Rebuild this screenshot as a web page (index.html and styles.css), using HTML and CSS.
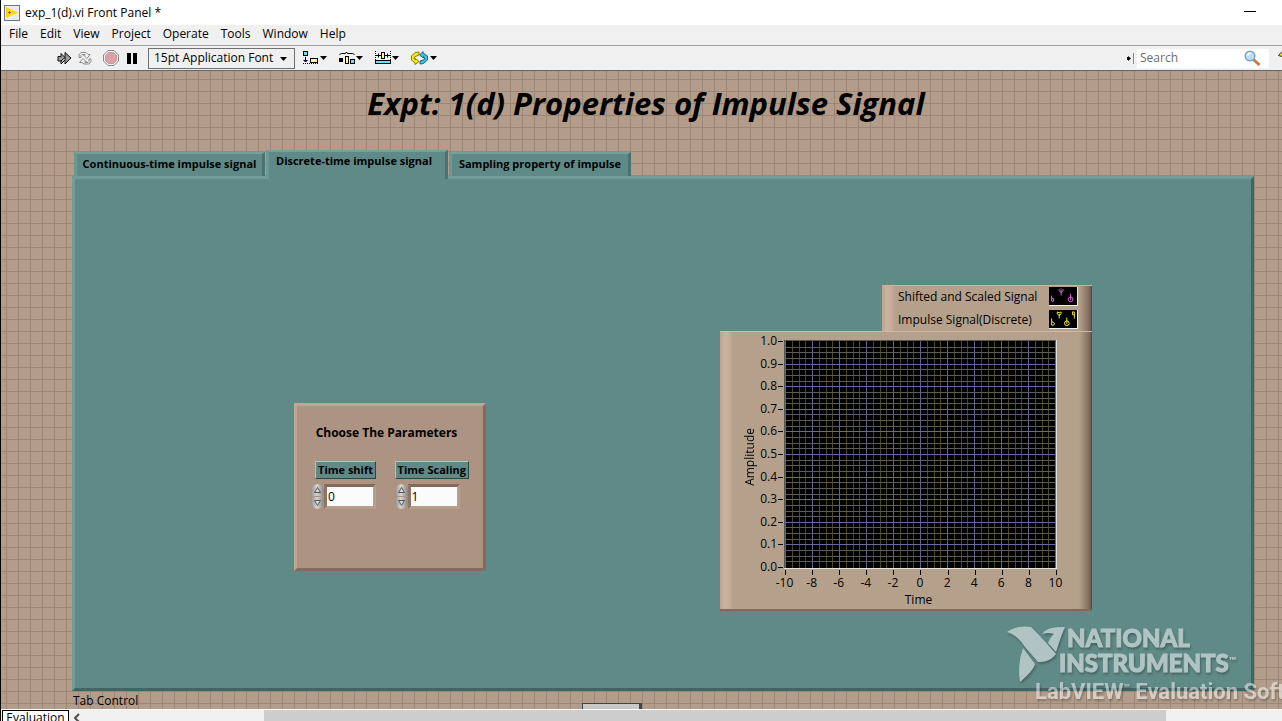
FILE: index.html
```
<!DOCTYPE html>
<html lang="en">
<head>
<meta charset="utf-8">
<title>exp_1(d).vi Front Panel *</title>
<link rel="stylesheet" href="styles.css">
</head>
<body>
<div class="window">
  <header class="titlebar">
    <svg class="app-icon" width="16" height="16" viewBox="0 0 16 16" aria-hidden="true">
      <rect x=".5" y=".5" width="15" height="15" fill="#e9ecef" stroke="#6f7780"/>
      <path d="M2 2l12 5.500L2 13z" fill="#ffd800"/><path d="M4 7.500h3M5.500 6v3" stroke="#8a6d2a"/>
    </svg>
    <span class="title-text">exp_1(d).vi Front Panel *</span>
    <button class="minimize" aria-label="Minimize"></button>
  </header>
  <nav class="menubar">
    <button>File</button><button>Edit</button><button>View</button><button>Project</button><button>Operate</button><button>Tools</button><button>Window</button><button>Help</button>
  </nav>
  <div class="toolbar">
    <button class="tool" aria-label="Run">
      <svg width="15" height="15" viewBox="0 0 15 15"><path d="M1 5.500h3V2.500l4 4V1.500l6 5.500-6 6V9l-4 4V10H1z" fill="#9a9a9a" stroke="#111"/><path d="M4 10l4-3.500L8 9" stroke="#111" fill="#fff"/></svg>
    </button>
    <button class="tool loop" aria-label="Run continuously">
      <svg width="16" height="15" viewBox="0 0 16 15" fill="#f4f4f4" stroke="#8a8a8a"><path d="M2 6.500V4l2-2.500h5L11 3.500h2L10 7.500 6.500 4H8.500L8 3.500H5L4 4.500v2z"/><path d="M14 8v2.500l-2 2.500H7L5 11.500H2.500L6 7.500 9.500 11H7.500l.5.500h3l1-1V8z"/></svg>
    </button>
    <button class="tool stop" aria-label="Abort">
      <svg width="16" height="16" viewBox="0 0 16 16"><path d="M5 .5h6L15.500 5v6L11 15.500H5L.5 11V5z" fill="#f5f0f0" stroke="#888"/><path d="M5.500 2.500h5l3 3v5l-3 3h-5l-3-3v-5z" fill="#d9a3a5" stroke="#c99"/></svg>
    </button>
    <button class="tool pause" aria-label="Pause">
      <svg width="10" height="11" viewBox="0 0 10 11"><path d="M0 0h4v11H0zM6 0h4v11H6z"/></svg>
    </button>
    <div class="font-box">
      <select class="font-select" aria-label="Text settings"><option>15pt Application Font</option></select>
      <svg class="font-arrow" width="7" height="4" viewBox="0 0 7 4"><path d="M0 0h7L3.500 4z"/></svg>
    </div>
    <button class="tool drop" aria-label="Align objects">
      <svg width="24" height="14" viewBox="0 0 24 14"><rect x=".5" y=".5" width="4" height="4" fill="#6fe0f8" stroke="#000"/><path d="M2.500 6v5M.5 9.500h4M1.500 10.500h2" stroke="#000"/><path d="M0 12.500h15" stroke="#000" stroke-dasharray="1 1"/><rect x="7.500" y="7.500" width="7" height="4" fill="#fff58a" stroke="#000"/><path d="M17 5h7l-3.500 4z"/></svg>
    </button>
    <button class="tool drop" aria-label="Distribute objects">
      <svg width="24" height="14" viewBox="0 0 24 14"><path d="M.5 3.500l2-1h4l1-1.500 1 1.500h5l2 1" fill="none" stroke="#000"/><path d="M0 7h4v4H0z"/><rect x="6.500" y="5.500" width="3" height="7" fill="#fff58a" stroke="#000"/><rect x="11.500" y="8.500" width="4" height="4" fill="#6fe0f8" stroke="#000"/><path d="M17 5h7l-3.500 4z"/></svg>
    </button>
    <button class="tool drop" aria-label="Resize objects">
      <svg width="24" height="14" viewBox="0 0 24 14"><path d="M.5 0v9M15.500 0v9" stroke="#000" stroke-dasharray="1 1"/><path d="M1 4.500h5M10 4.500h5M3.500 2.500v4M12.500 2.500v4" stroke="#000"/><rect x="6.500" y="1.500" width="3" height="6" fill="#fff58a" stroke="#000"/><rect x=".5" y="9.500" width="15" height="3" fill="#6fe0f8" stroke="#000"/><path d="M17 5h7l-3.500 4z"/></svg>
    </button>
    <button class="tool drop" aria-label="Reorder">
      <svg width="26" height="14" viewBox="0 0 26 14"><path d="M8 1L4 1.500.5 5v4L4 12v1.500L8 10.500 4.500 7.500V9L3.500 8V6L8 4z" fill="#f3e51c" stroke="#8a8200"/><path d="M9 13l3.500-.5 4-3.500V5L12 2V.5L8.500 4l4 3V5.500l1 1v2L9 10z" fill="#4ab8dc" stroke="#176d8c"/><path d="M19 5h7l-3.500 4z"/></svg>
    </button>
    <div class="search-area">
      <svg width="7" height="11" viewBox="0 0 7 11" aria-hidden="true"><path d="M0 4h1v3H0zM1 3l3 2.500L1 8z"/><path d="M6.500 0v11" stroke="#888"/></svg>
      <div class="search-box">
        <input class="search" type="text" placeholder="Search" aria-label="Search">
        <svg width="17" height="17" viewBox="0 0 17 17" aria-hidden="true"><path d="M9.500 9.500l6 5.500" stroke="#c47a45" stroke-width="3"/><circle cx="6" cy="6" r="4.800" fill="#b9e2f7" stroke="#7fa3bd" stroke-width="1.500"/><path d="M3.500 5.500q1-2.500 3-2.500" stroke="#fff" stroke-width="1.500" fill="none"/></svg>
      </div>
      <button class="tool help" aria-label="Context help"><svg width="12" height="16" viewBox="0 0 12 16"><path d="M.5 5.500L4 1.500h5l2.500 3v3L8 10.500v1H4.500V8L8 6 7 4.500H5.500L4 6.500z" fill="#f3e51c" stroke="#333"/></svg></button>
    </div>
  </div>

  <main class="panel">
    <h1 class="heading">Expt: 1(d) Properties of Impulse Signal</h1>
    <div class="tabs" role="tablist">
      <button class="tab" role="tab" aria-selected="false">Continuous-time impulse signal</button>
      <button class="tab selected" role="tab" aria-selected="true">Discrete-time impulse signal</button>
      <button class="tab" role="tab" aria-selected="false">Sampling property of impulse</button>
    </div>
    <section class="page" role="tabpanel">
      <div class="card">
        <h2 class="card-title">Choose The Parameters</h2>
        <div class="fields">
          <div class="field">
            <label class="field-label" for="shift">Time shift</label>
            <div class="numeric">
              <div class="stepper">
                <button class="step up" aria-label="Increase time shift"><svg width="7" height="6" viewBox="0 0 7 6"><path d="M.5 5.500l3-5 3 5z"/></svg></button>
                <button class="step down" aria-label="Decrease time shift"><svg width="7" height="6" viewBox="0 0 7 6"><path d="M.5.500l3 5 3-5z"/></svg></button>
              </div>
              <input class="value" id="shift" type="text" value="0">
            </div>
          </div>
          <div class="field">
            <label class="field-label" for="scaling">Time Scaling</label>
            <div class="numeric">
              <div class="stepper">
                <button class="step up" aria-label="Increase time scaling"><svg width="7" height="6" viewBox="0 0 7 6"><path d="M.5 5.500l3-5 3 5z"/></svg></button>
                <button class="step down" aria-label="Decrease time scaling"><svg width="7" height="6" viewBox="0 0 7 6"><path d="M.5.500l3 5 3-5z"/></svg></button>
              </div>
              <input class="value" id="scaling" type="text" value="1">
            </div>
          </div>
        </div>
      </div>

      <div class="graph">
        <div class="legend">
          <div class="legend-row"><span>Shifted and Scaled Signal</span>
            <svg class="swatch" width="29" height="19" viewBox="0 0 29 19" fill="none" stroke="#e56be5"><path d="M2.500 9v6h2v-3h-2M12.500 2.500v-1M10.500 2v2l2 2 2-2V2M12.500 3v6M22.500 7v7"/><circle cx="22.500" cy="13" r="2.500"/></svg>
          </div>
          <div class="legend-row"><span>Impulse Signal(Discrete)</span>
            <svg class="swatch" width="29" height="19" viewBox="0 0 29 19" fill="none" stroke="#f5ee2e"><path d="M2.500 9v7h2l1-2-3-2M8.500 2v2l2 2 2-2V2l-2 1zM10.500 4v5M18.500 8v7M26.500 2h-2v3h2M26.500 2v7"/><circle cx="18.500" cy="14" r="2.500"/></svg>
          </div>
        </div>
        <div class="chart">
          <span class="axis-name vertical">Amplitude</span>
          <ol class="y-scale"><li>1.0</li><li>0.9</li><li>0.8</li><li>0.7</li><li>0.6</li><li>0.5</li><li>0.4</li><li>0.3</li><li>0.2</li><li>0.1</li><li>0.0</li></ol>
          <svg class="plot" width="273" height="229" viewBox="0 0 273 229" shape-rendering="crispEdges" role="img" aria-label="Empty plot">
            <defs>
              <pattern id="cols" x="1" width="27" height="229" patternUnits="userSpaceOnUse"><path d="M7 0h1v229H7zM14 0h1v229h-1zM20 0h1v229h-1z" fill="#4b4a0a"/></pattern>
              <pattern id="major" x="1" width="27" height="229" patternUnits="userSpaceOnUse"><path d="M0 0h1v229H0z" fill="#62628c"/></pattern>
            </defs>
            <rect width="273" height="229" fill="#e6e0da"/>
            <rect width="272" height="228" fill="#000"/>
            <rect width="272" height="228" fill="url(#cols)"/>
            <path transform="translate(0 1)" stroke="#5c5c5c" d="M0 6.500h272M0 11.500h272M0 17.500h272M0 28.500h272M0 34.500h272M0 40.500h272M0 51.500h272M0 57.500h272M0 62.500h272M0 73.500h272M0 79.500h272M0 85.500h272M0 96.500h272M0 102.500h272M0 107.500h272M0 119.500h272M0 124.500h272M0 130.500h272M0 141.500h272M0 147.500h272M0 153.500h272M0 164.500h272M0 170.500h272M0 175.500h272M0 186.500h272M0 192.500h272M0 198.500h272M0 209.500h272M0 215.500h272M0 220.500h272"/>
            <rect width="272" height="228" fill="url(#major)"/>
            <path transform="translate(0 1)" stroke="#6a6a98" d="M0 23.500h272M0 45.500h272M0 68.500h272M0 90.500h272M0 113.500h272M0 136.500h272M0 158.500h272M0 181.500h272M0 203.500h272"/>
            <path d="M0 .5h272M.5 0v228" stroke="#555"/>
          </svg>
          <ol class="x-scale"><li>-10</li><li>-8</li><li>-6</li><li>-4</li><li>-2</li><li>0</li><li>2</li><li>4</li><li>6</li><li>8</li><li>10</li></ol>
          <span class="axis-name horizontal">Time</span>
        </div>
      </div>
    </section>
    <p class="caption">Tab Control</p>
    <div class="peek"></div>
    <div class="watermark">
      <div class="brand">
        <svg width="60" height="56" viewBox="0 0 60 56" aria-hidden="true"><path d="M0 6Q10-1 24 1L33 10 49 28Q42 37 31 36L18 21Q10 9 0 6z"/><path d="M16 22L28 38Q27 44 13 56 10 40 16 22z"/><path d="M35 8Q40 0 58 1 54 10 49 26L41 17Q44 10 47 8 41 6 35 8z"/></svg>
        <div class="brand-name"><span>NATIONAL</span><span class="second">INSTRUMENTS<sup>™</sup></span></div>
      </div>
      <div class="edition">LabVIEW<sup>™</sup> Evaluation Software</div>
    </div>
  </main>

  <footer class="statusbar">
    <span class="status">Evaluation</span>
    <div class="scrollbar">
      <svg width="6" height="10" viewBox="0 0 6 10"><path d="M5 1L1 5l4 4" fill="none" stroke="#505050" stroke-width="2"/></svg>
      <div class="thumb"></div>
    </div>
  </footer>
</div>
</body>
</html>
```
FILE: styles.css
```
* { box-sizing: border-box; }
body { margin: 0; font: 12px/16px "Open Sans", "Noto Sans", sans-serif; color: #000; }
button, input, select { font: inherit; color: inherit; border: 0; padding: 0; margin: 0; background: none; }
svg { display: block; flex: none; }
h1, h2, p, ol { margin: 0; padding: 0; list-style: none; }

.window { display: flex; flex-direction: column; height: 100vh; overflow: hidden; border-left: 1px solid #000; background: #f0f0f0; }
.titlebar { display: flex; align-items: center; height: 25px; padding: 0 26px 0 3px; background: #fff; flex: none; }
.title-text { margin-left: 5px; }
.minimize { margin-left: auto; width: 12px; height: 12px; border-bottom: 1px solid #000; align-self: flex-start; }
.menubar { display: flex; gap: 12px; height: 20px; padding: 0 8px 2px; align-items: center; flex: none; }
.toolbar { display: flex; align-items: center; height: 26px; padding-left: 56px; border-top: 1px solid #a0a0a0; border-bottom: 1px solid #646464; background: #f0f0f0; flex: none; overflow: hidden; }
.tool { display: flex; flex: none; }
.loop { margin-left: 5px; }
.stop { margin-left: 10px; }
.pause { margin-left: 8px; }
.font-box { position: relative; margin: 0 8px 0 11px; flex: none; }
.font-select { appearance: none; width: 147px; height: 21px; padding: 0 5px; border: 1px solid #707070; border-radius: 0; }
.font-arrow { position: absolute; right: 8px; top: 9px; pointer-events: none; }
.drop { margin-right: 12px; }
.search-area { display: flex; align-items: center; margin-left: auto; flex: none; margin-right: -8px; }
.search-box { display: flex; align-items: center; width: 132px; height: 19px; margin: 0 9px 0 3px; padding: 0 8px 0 3px; background: #fff; }
.search { flex: 1; min-width: 0; outline: 0; }
.search::placeholder { color: #6d6d6d; opacity: 1; }

.panel { position: relative; display: flex; flex-direction: column; flex: 1; min-height: 0; padding: 0 28px 0 71px; overflow: hidden;
  background-color: #b39d8a;
  background-image: linear-gradient(#9c8776 1px, transparent 1px), linear-gradient(90deg, #9c8776 1px, transparent 1px);
  background-size: 12px 12px; background-position: 5px 8px; }
.heading { padding: 12px 0 27px; margin-left: -34px; font: italic bold 31px/40px "Open Sans", sans-serif; text-align: center; }
.tabs { display: flex; align-items: flex-end; gap: 1px; padding-left: 2px; margin-bottom: -3px; position: relative; flex: none; }
.tab { height: 24px; width: 191px; margin-bottom: 3px; padding-bottom: 2px; font-size: 11px; font-weight: bold; white-space: nowrap; background: #608a87; border: solid; border-width: 2px 3px 0; border-color: #74a09d #4a726f #74a09d #6c9895; }
.tab + .tab { width: 182px; }
.tab.selected { height: 29px; margin-bottom: 0; padding-bottom: 9px; padding-right: 6px; }
.page { flex: 1; display: flex; justify-content: space-between; align-items: flex-end; min-height: 0; padding: 0 159px 77px 219px; background: #608a87; border: 3px solid; border-color: #709c99 #3c6764 #3c6764 #709c99; }
.caption { height: 18px; line-height: 20px; padding-left: 1px; flex: none; }
.peek { position: absolute; left: 581px; bottom: 0; width: 60px; height: 6px; background: #c8c8c8; border: 1px solid #444; border-right-width: 3px; border-bottom: 0; }

.card { display: flex; flex-direction: column; height: 168px; width: 192px; margin-bottom: 40px; padding: 19px 14px; background: #ad9381; border: 3px solid; border-color: #c0a593 #856b5d #856b5d #c0a593; }
.card-title { padding-right: 7px; font-size: 12px; line-height: 16px; text-align: center; white-space: nowrap; margin-bottom: 20px; }
.fields { display: flex; justify-content: space-between; }
.field { display: flex; flex-direction: column; align-items: flex-end; }
.field-label { padding: 0 2px; font-size: 11px; font-weight: bold; white-space: nowrap; background: #608a87; border: 1px solid; border-color: #a6c8c5 #2d4644 #2d4644 #a6c8c5; }
.numeric { display: flex; align-self: flex-start; margin-top: 5px; }
.stepper { display: flex; flex-direction: column; gap: 1px; width: 13px; }
.step { display: flex; align-items: center; justify-content: center; height: 12px; background: linear-gradient(90deg, #909090, #d8d4d0 45%, #858585); }
.step path { fill: #d8d8d8; stroke: #555; }
.up { border-radius: 7px 7px 0 0; }
.down { border-radius: 0 0 7px 7px; }
.value { width: 52px; height: 25px; padding: 0 1px; background: #fbfbfb; border: 3px solid; border-width: 3px; border-color: #84695b #b99d8c #b99d8c #907466; border-radius: 0; outline: 0; }

.graph { display: flex; flex-direction: column; align-items: flex-end; flex: none; }
.legend, .chart { background: linear-gradient(90deg, #bda48f, #cbb39f 5px, #c3ab97 10px, transparent 13px), linear-gradient(270deg, #4c4037, #77675a 2px, #a8927f 10px, transparent 13px), #b5a18b; }
.legend { width: 210px; height: 46px; padding: 1px 14px 0 16px; border-top: 1px solid #c9b29e; }
.legend-row { display: flex; justify-content: space-between; align-items: center; height: 19px; white-space: nowrap; margin-bottom: 4px; }
.swatch { background: #000; border-right: 1px solid #eee; border-bottom: 1px solid #eee; }
.chart { display: grid; grid-template-columns: 18px 26px 273px; grid-template-rows: 229px auto auto; width: 372px; height: 280px; padding: 8px 0 0 20px; border-top: 1px solid #d0b8a5; border-bottom: 2px solid #80695a; }
.axis-name.vertical { writing-mode: vertical-rl; transform: rotate(180deg); text-align: center; place-self: center end; margin-top: 4px; }
.y-scale { display: flex; flex-direction: column; justify-content: space-between; height: 242px; margin: -7px 1px 0 0; }
.y-scale li { position: relative; height: 16px; padding-right: 6px; text-align: right; }
.y-scale li::after { content: ""; position: absolute; right: 0; top: 8px; width: 5px; height: 1px; background: #000; }
.x-scale { grid-column: 3; display: flex; justify-content: space-between; width: 298px; margin: 1px 0 0 -13px; }
.x-scale li { position: relative; width: 28px; padding-top: 4px; line-height: 17px; text-align: center; }
.x-scale li::before { content: ""; position: absolute; left: 14px; top: 0; width: 1px; height: 5px; background: #000; }
.axis-name.horizontal { grid-column: 3; text-align: center; padding-right: 4px; margin-top: -1px; }

.watermark { position: absolute; right: 0; top: 555px; width: 275px; color: #fff; fill: #fff; opacity: .5; overflow: hidden; white-space: nowrap; filter: drop-shadow(1px 2px 1px #0008); }
.brand { display: flex; height: 54px; }
.brand-name { display: flex; flex-direction: column; gap: 1px; font: 900 24px/24px Lato, sans-serif; -webkit-text-stroke: 1px #fff; }
.brand-name .second { margin-left: -8px; }
.watermark sup { font-size: 10px; line-height: 0; vertical-align: 8px; -webkit-text-stroke: 0; }
.edition { margin: 0 0 4px 28px; font: bold 22px/24px Roboto, "Liberation Sans", sans-serif; }

.statusbar { display: flex; height: 12px; border-top: 1px solid #fff; flex: none; overflow: hidden; }
.status { width: 67px; height: 18px; margin-left: 1px; border: 1px solid #000; background: #fff; text-align: center; line-height: 14px; flex: none; }
.scrollbar { display: flex; flex: 1; padding: 3px 116px 0 5px; background: #f0f0f0; }
.thumb { flex: 1; height: 17px; margin: -3px 0 0 184px; background: #cdcdcd; }
```
